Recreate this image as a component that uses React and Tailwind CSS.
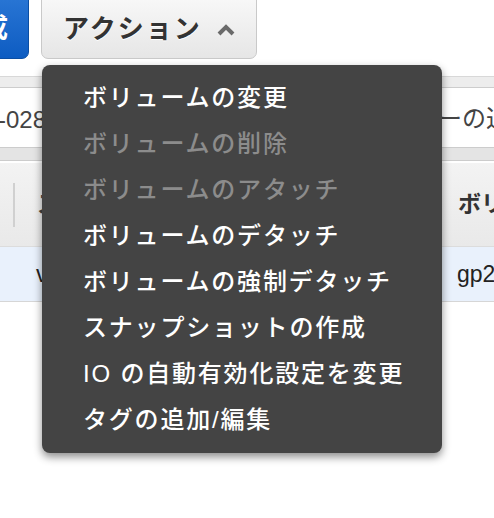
import React from 'react';

const items = [
  { label: 'ボリュームの変更', disabled: false },
  { label: 'ボリュームの削除', disabled: true },
  { label: 'ボリュームのアタッチ', disabled: true },
  { label: 'ボリュームのデタッチ', disabled: false },
  { label: 'ボリュームの強制デタッチ', disabled: false },
  { label: 'スナップショットの作成', disabled: false },
  { label: 'IO の自動有効化設定を変更', disabled: false },
  { label: 'タグの追加/編集', disabled: false },
];

export default function App() {
  return (
    <div className="relative w-[494px] h-[518px] overflow-hidden bg-white font-['Liberation_Sans','Noto_Sans_CJK_JP',sans-serif]">
      {/* Toolbar */}
      <div className="flex items-start gap-[12px] h-[76px]">
        <button className="shrink-0 -ml-[60px] -mt-[10px] h-[69px] w-[89px] rounded-br-[7px] border border-[#0b4ea3] bg-gradient-to-b from-[#2b78d6] to-[#0c5cc2] text-white text-[26px] font-bold flex items-center justify-end pr-[20px] pt-[8px]">
          作成
        </button>
        <button className="shrink-0 -mt-[10px] h-[69px] w-[216px] rounded-b-[7px] border border-[#c9c9c9] bg-gradient-to-b from-[#fafafa] to-[#e6e6e6] flex items-center pl-[21px] pt-[10px] text-[#333] text-[26px] font-bold [text-shadow:0_1px_0_#fff]">
          <span className="tracking-[2px]">アクション</span>
          <svg className="ml-[13px] mt-[1px]" width="22" height="14" viewBox="0 0 22 14">
            <polyline points="4,11 11,4 18,11" fill="none" stroke="#6a6a6a" strokeWidth="4" strokeLinejoin="miter" />
          </svg>
        </button>
      </div>

      {/* Filter band */}
      <div className="h-[12px] bg-[#ededed] border-t border-[#d8d8d8] border-b border-b-[#cdcdcd]" />
      <div className="h-[59px] flex items-center justify-between text-[24px] text-[#444]">
        <span className="-ml-[2px] pt-[5px]">-0281</span>
        <span className="whitespace-nowrap pt-[3px] -mr-[40px]">ーの追加</span>
      </div>
      <div className="h-[14px] bg-[#e4e4e4] border-y border-[#cccccc]" />

      {/* Table header */}
      <div className="mt-[2px] h-[84px] bg-gradient-to-b from-[#f3f3f3] to-[#e9e9e9] border-b border-[#dcdcdc] flex items-center">
        <div className="w-[15px] h-[44px] border-r-2 border-[#d0d0d0] shrink-0" />
        <span className="ml-[22px] text-[23px] font-bold text-[#444]">ス</span>
        <span className="ml-auto -mr-[20px] text-[23px] font-bold text-[#333] whitespace-nowrap w-[56px] overflow-hidden">ボリューム</span>
      </div>

      {/* Selected row */}
      <div className="h-[55px] bg-[#e9f1fc] border-b border-[#d6d6d6] flex items-center text-[23px] text-[#222]">
        <span className="ml-[36px]">v</span>
        <span className="ml-auto w-[37px] overflow-hidden whitespace-nowrap">gp2</span>
      </div>

      {/* Dropdown menu */}
      <div className="absolute left-[42px] top-[65px] w-[400px] rounded-[8px] bg-[#444444] shadow-[0_4px_8px_rgba(0,0,0,0.45)] py-[10px]">
        {items.map((item) => (
          <div
            key={item.label}
            className={
              'h-[46px] flex items-center pl-[41px] text-[24px] font-medium tracking-[1.8px] whitespace-nowrap ' +
              (item.disabled ? 'text-[#8c8c8c]' : 'text-white')
            }
          >
            {item.label}
          </div>
        ))}
      </div>
    </div>
  );
}
